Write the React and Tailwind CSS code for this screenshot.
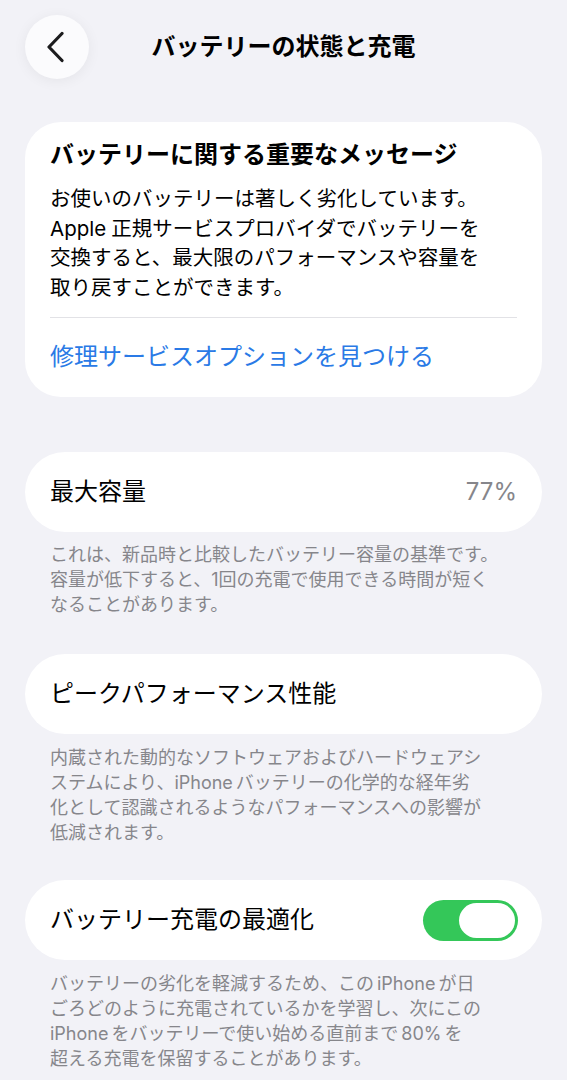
const FONT = { fontFamily: '"Inter", "Noto Sans CJK JP", sans-serif' };

const Footer = ({ lines, className = "" }) => (
  <div className={`px-[50px] text-[18px] leading-[25px] text-[#86868b] ${className}`}>
    {lines.map((line) => (
      <div key={line} className="whitespace-nowrap">
        {line}
      </div>
    ))}
  </div>
);

const Row = ({ title, right, className = "" }) => (
  <div
    className={`mx-[25px] flex h-[80px] items-center justify-between rounded-[40px] bg-white pl-[25px] pr-[25px] ${className}`}
  >
    <span className="text-[24px] leading-[30px] text-black">{title}</span>
    {right}
  </div>
);

function Toggle() {
  return (
    <div className="flex h-[41px] w-[95px] items-center justify-end rounded-full bg-[#34c759] p-[3px] -mr-[1px]">
      <div className="h-[35px] w-[56px] rounded-full bg-white" />
    </div>
  );
}

export default function App() {
  return (
    <div className="min-h-[1080px] w-full overflow-hidden bg-[#f2f2f7] pb-10" style={FONT}>
      <header className="grid grid-cols-[64px_1fr_64px] items-center px-[25px] pt-[15px]">
        <button className="flex h-[64px] w-[64px] items-center justify-center rounded-full bg-[#fbfbfd] shadow-[0_2px_14px_rgba(0,0,0,0.06)]">
          <svg width="20" height="32" viewBox="0 0 20 32" fill="none" className="-ml-[1px]">
            <path
              d="M15 2.5 L2 16 L15 29.5"
              stroke="#1c1c1e"
              strokeWidth="3.2"
              strokeLinecap="round"
              strokeLinejoin="round"
            />
          </svg>
        </button>
        <h1 className="text-center text-[24px] font-semibold leading-[30px] text-black">
          バッテリーの状態と充電
        </h1>
        <div />
      </header>

      <section className="mx-[25px] mt-[43px] rounded-[36px] bg-white px-[25px] pb-[25px] pt-[18px]">
        <h2 className="text-[24px] font-bold leading-[30px] text-black">
          バッテリーに関する重要なメッセージ
        </h2>
        <div className="mt-[14px] text-[20.5px] leading-[29.5px] text-black">
          <div className="whitespace-nowrap">お使いのバッテリーは著しく劣化しています。</div>
          <div className="whitespace-nowrap">Apple{"\u2005"}正規サービスプロバイダでバッテリーを</div>
          <div className="whitespace-nowrap">交換すると、最大限のパフォーマンスや容量を</div>
          <div className="whitespace-nowrap">取り戻すことができます。</div>
        </div>
        <div className="mt-[15px] h-px bg-[#e2e2e6]" />
        <a href="#" className="mt-[24px] block text-[24px] leading-[30px] text-[#2a7ae6]">
          修理サービスオプションを見つける
        </a>
      </section>

      <Row
        className="mt-[55px]"
        title="最大容量"
        right={<span className="text-[24px] leading-[30px] text-[#86868b]">77%</span>}
      />
      <Footer
        className="mt-[10px]"
        lines={[
          "これは、新品時と比較したバッテリー容量の基準です。",
          "容量が低下すると、1回の充電で使用できる時間が短く",
          "なることがあります。",
        ]}
      />

      <Row className="mt-[37px]" title="ピークパフォーマンス性能" />
      <Footer
        className="mt-[11px]"
        lines={[
          "内蔵された動的なソフトウェアおよびハードウェアシ",
          "ステムにより、iPhone\u2006バッテリーの化学的な経年劣",
          "化として認識されるようなパフォーマンスへの影響が",
          "低減されます。",
        ]}
      />

      <Row className="mt-[35px]" title="バッテリー充電の最適化" right={<Toggle />} />
      <Footer
        className="mt-[11px]"
        lines={[
          "バッテリーの劣化を軽減するため、この\u2006iPhone\u2006が日",
          "ごろどのように充電されているかを学習し、次にこの",
          "iPhone\u2006をバッテリーで使い始める直前まで\u200680%\u2006を",
          "超える充電を保留することがあります。",
        ]}
      />
    </div>
  );
}
